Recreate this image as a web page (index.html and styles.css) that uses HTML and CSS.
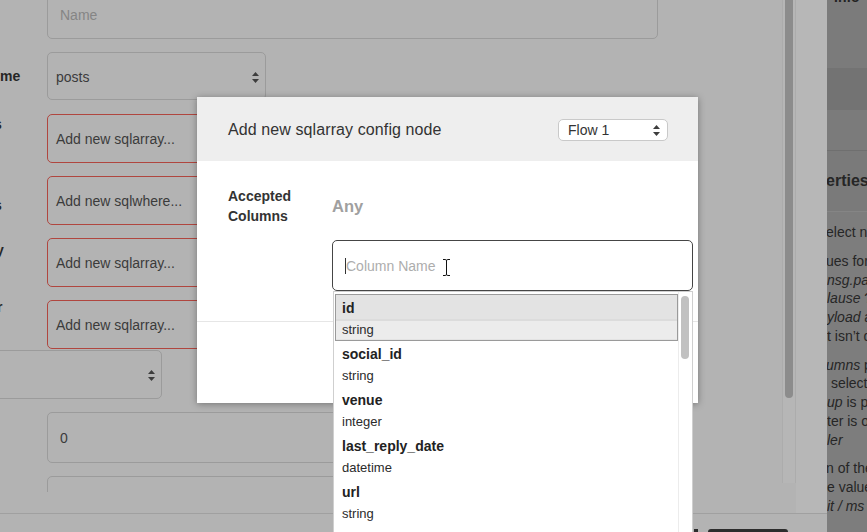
FILE: index.html
```html
<!DOCTYPE html>
<html>
<head>
<meta charset="utf-8">
<title>Add new sqlarray config node</title>
<link rel="stylesheet" href="styles.css">
</head>
<body>
<div class="tray">
  <div class="tray-body">
    <div class="form">
      <div class="form-inner">
        <div class="row h49">
          <div class="lbl"></div>
          <div class="field text w611"><span class="ph">Name</span></div>
        </div>
        <div class="row h48 mb1">
          <div class="lbl mid">me</div>
          <div class="field sel w219">posts<svg class="arr" width="7" height="11" viewBox="0 0 7 11"><path d="M3.5 0L7 4H0Z M0 7H7L3.5 11Z"/></svg></div>
        </div>
        <div class="row h49">
          <div class="lbl"><span class="cut">s</span></div>
          <div class="field err w560">Add new sqlarray...</div>
        </div>
        <div class="row h49">
          <div class="lbl top"><br><span class="cut">s</span></div>
          <div class="field err w560">Add new sqlwhere...</div>
        </div>
        <div class="row h49">
          <div class="lbl dn"><span class="cut2">y</span></div>
          <div class="field err w560">Add new sqlarray...</div>
        </div>
        <div class="row h49 mbneg">
          <div class="lbl up"><span class="cut3">r</span></div>
          <div class="field err w560">Add new sqlarray...</div>
        </div>
        <div class="row h49">
          <div class="field sel wsel">&nbsp;<svg class="arr" width="7" height="11" viewBox="0 0 7 11"><path d="M3.5 0L7 4H0Z M0 7H7L3.5 11Z"/></svg></div>
        </div>
        <div class="row h51">
          <div class="lbl"></div>
          <div class="field text w611">0</div>
        </div>
        <div class="row h49">
          <div class="lbl"></div>
          <div class="field text w611"></div>
        </div>
      </div>
    </div>
    <div class="scroll"><div class="thumb"></div></div>
    <div class="gutter"></div>
  </div>
  <div class="tray-footer">
    <div class="btn-a"></div>
    <div class="btn-b"></div>
  </div>
</div>

<div class="sidebar">
  <div class="sb-tabs"><div class="sb-tab">Info</div></div>
  <div class="sb-band1"></div>
  <div class="sb-band2"></div>
  <div class="sb-head">erties</div>
  <div class="sb-content">
    <p>elect n</p>
    <p>ues for<br><i>nsg.pay</i><br><i>lause</i> ?<br><i>yload</i> a<br>t isn’t d</p>
    <p><i>umns</i> p<br>&nbsp;select<br><i>up</i> is p<br>ter is o<br><i>ler</i></p>
    <p>n of the<br>e value<br><i>it / ms</i></p>
  </div>
</div>

<div class="dialog">
  <div class="dlg-head">
    <div class="dlg-title">Add new sqlarray config node</div>
    <div class="flow-sel">Flow 1<svg class="arr" width="7" height="11" viewBox="0 0 7 11"><path d="M3.5 0L7 4H0Z M0 7H7L3.5 11Z"/></svg></div>
  </div>
  <div class="dlg-body">
    <div class="dlg-label">Accepted<br>Columns</div>
    <div class="dlg-col">
      <div class="any">Any</div>
      <div class="col-wrap">
        <div class="col-input"><span class="caret"></span><span class="col-ph">Column Name</span><svg class="ibeam" width="9" height="17" viewBox="0 0 9 17"><path d="M1 .5h2.2q1.3 0 1.3 1.3q0-1.3 1.3-1.3H8M4.5 1.8v13.4M1 16.5h2.2q1.3 0 1.3-1.3q0 1.3 1.3 1.3H8"/></svg></div>
        <div class="dd">
          <div class="dd-list">
            <div class="item active"><div class="it-name">id</div><div class="it-type">string</div></div>
            <div class="item"><div class="it-name">social_id</div><div class="it-type">string</div></div>
            <div class="item"><div class="it-name">venue</div><div class="it-type">integer</div></div>
            <div class="item"><div class="it-name">last_reply_date</div><div class="it-type">datetime</div></div>
            <div class="item"><div class="it-name">url</div><div class="it-type">string</div></div>
          </div>
          <div class="dd-scroll"><div class="dd-thumb"></div></div>
        </div>
      </div>
    </div>
  </div>
  <div class="dlg-foot"></div>
</div>
</body>
</html>
```

FILE: styles.css
```css
* { box-sizing: border-box; }
html, body { margin: 0; padding: 0; }
body {
  width: 867px;
  height: 532px;
  overflow: hidden;
  position: relative;
  display: flex;
  background: #b3b3b3;
  font-family: "Liberation Sans", Arial, sans-serif;
  color: #333;
}

/* ---------- tray ---------- */
.tray { width: 827px; flex: none; display: flex; flex-direction: column; }
.tray-body { height: 513px; display: flex; }
.form { width: 782px; height: 492px; overflow: hidden; flex: none; }
.form-inner { margin-top: -10px; display: flex; flex-direction: column; gap: 13px; }
.row { display: flex; align-items: flex-start; }
.h49 { height: 49px; }
.h48 { height: 48px; }
.h51 { height: 51px; }
.mb1 { margin-bottom: 1px; }
.mbneg { margin-bottom: -12px; }

.lbl {
  width: 47px;
  flex: none;
  font-weight: bold;
  font-size: 14px;
  line-height: 20px;
  color: #262626;
  white-space: nowrap;
  overflow: hidden;
}
.lbl.mid { align-self: center; margin-top: -1px; }
.lbl.top { margin-top: -1px; }
.lbl.dn { margin-top: 2px; }
.lbl.up { margin-top: -3px; }
.cut { margin-left: -6px; }
.cut2 { margin-left: -4px; }
.cut3 { margin-left: -3px; }

.field {
  height: 100%;
  border: 1px solid #9b9b9b;
  border-radius: 5px;
  display: flex;
  align-items: center;
  padding: 0 6px 0 8px;
  font-size: 14px;
  color: #3b3b3b;
  flex: none;
}
.field.sel { padding-top: 2px; }
.field.text { padding-left: 12px; }
.field.err { border-color: #b0463f; padding-top: 1px; }
.ph { color: #858585; }
.w611 { width: 611px; }
.w219 { width: 219px; }
.w560 { width: 560px; }
.wsel { width: 182px; margin-left: -20px; }
.arr { margin-left: auto; fill: #3d3d3d; flex: none; }

.scroll {
  width: 14px;
  height: 483px;
  flex: none;
  background: #b6b6b6;
  border-left: 1px solid #acacac;
  border-right: 1px solid #acacac;
  padding-left: 2px;
}
.thumb { width: 8px; height: 398px; background: #8c8c8c; border-radius: 0 0 4px 4px; }
.gutter { flex: 1; background: #b7b7b7; }

.tray-footer {
  height: 19px;
  border-top: 1px solid #a0a0a0;
  display: flex;
  align-items: flex-end;
  padding-left: 694px;
}
.btn-a { width: 4px; height: 3px; background: #2d2d2d; }
.btn-b { width: 80px; height: 3px; margin-left: 10px; background: #2d2d2d; border-radius: 3px 3px 0 0; }

/* ---------- sidebar ---------- */
.sidebar {
  width: 40px;
  flex: none;
  background: #7d7d7d;
  overflow: hidden;
  color: #262626;
  font-size: 14px;
  white-space: nowrap;
}
.sb-tabs { height: 68px; overflow: hidden; background: #7b7b7b; }
.sb-tab { margin-top: -13px; padding-left: 7px; font-weight: bold; line-height: 20px; color: #222; }
.sb-band1 { height: 42px; background: #737373; }
.sb-band2 { height: 41px; background: #7b7b7b; border-bottom: 1px solid #6f6f6f; }
.sb-head {
  height: 61px;
  line-height: 60px;
  font-weight: bold;
  font-size: 16px;
  text-indent: -1px;
  border-bottom: 1px solid #858585;
  background: #7a7a7a;
}
.sb-content { padding-top: 11px; background: #7d7d7d; }
.sb-content p { margin: 0 0 10px; text-indent: -1px; line-height: 18.75px; }

/* ---------- dialog ---------- */
.dialog {
  position: absolute;
  left: 197px;
  top: 97px;
  width: 501px;
  height: 306px;
  background: #fff;
  box-shadow: 0 1px 7px rgba(0, 0, 0, 0.35);
  display: flex;
  flex-direction: column;
}
.dlg-head {
  height: 64px;
  flex: none;
  background: #eeeeee;
  display: flex;
  align-items: center;
  justify-content: space-between;
  padding: 2px 30px 0 31px;
}
.dlg-title { font-size: 16px; color: #333; letter-spacing: 0.1px; }
.flow-sel {
  width: 110px;
  height: 22px;
  background: #fff;
  border: 1px solid #c9c9c9;
  border-radius: 5px;
  display: flex;
  align-items: center;
  padding: 0 7px 0 9px;
  font-size: 14px;
  color: #333;
}
.dlg-body {
  height: 160px;
  flex: none;
  display: flex;
  padding: 25px 5px 0 31px;
}
.dlg-label {
  width: 104px;
  flex: none;
  font-weight: bold;
  font-size: 14px;
  line-height: 20px;
  color: #333;
}
.dlg-col { flex: 1; display: flex; flex-direction: column; }
.any {
  margin-top: 10px;
  font-weight: bold;
  font-size: 16.5px;
  line-height: 20px;
  color: #a0a0a0;
}
.col-wrap { position: relative; margin-top: 24px; }
.col-input {
  height: 51px;
  border: 1px solid #454545;
  border-radius: 5px;
  display: flex;
  align-items: center;
  padding-left: 12px;
  font-size: 14px;
}
.caret { width: 1px; height: 16px; background: #333; flex: none; margin-top: 1px; }
.col-ph { color: #adadad; }
.ibeam { margin-left: 7px; margin-top: 3px; fill: none; stroke: #111; stroke-width: 1; }
.dlg-foot { flex: 1; border-top: 1px solid #e6e6e6; }

/* ---------- dropdown ---------- */
.dd {
  position: absolute;
  left: 1px;
  top: 51px;
  width: 360px;
  height: 250px;
  background: #fff;
  border: 1px solid #cfcfcf;
  display: flex;
  z-index: 2;
}
.dd-list { width: 344px; flex: none; padding: 2px 0 0 1px; }
.item {
  width: 343px;
  height: 46px;
  border: 1px solid transparent;
  padding: 2px 0 0 6px;
}
.item.active {
  border-color: #9a9a9a;
  background: #e3e3e3;
  padding: 2px 0 0 0;
  height: 47px;
  margin-bottom: -1px;
}
.item.active .it-name { padding-left: 6px; line-height: 22px; }
.item.active .it-type {
  padding-left: 6px;
  background: #ececec;
  border-top: 2px solid #dcdcdc;
  line-height: 18px;
}
.it-name { font-weight: bold; font-size: 14px; line-height: 22px; color: #222; }
.it-type { font-size: 13px; line-height: 21px; color: #2b2b2b; }
.dd-scroll {
  width: 14px;
  flex: none;
  border-left: 1px solid #ececec;
  padding: 4px 0 0 2px;
}
.dd-thumb { width: 8px; height: 63px; background: #c1c1c1; border-radius: 4px; }
```
